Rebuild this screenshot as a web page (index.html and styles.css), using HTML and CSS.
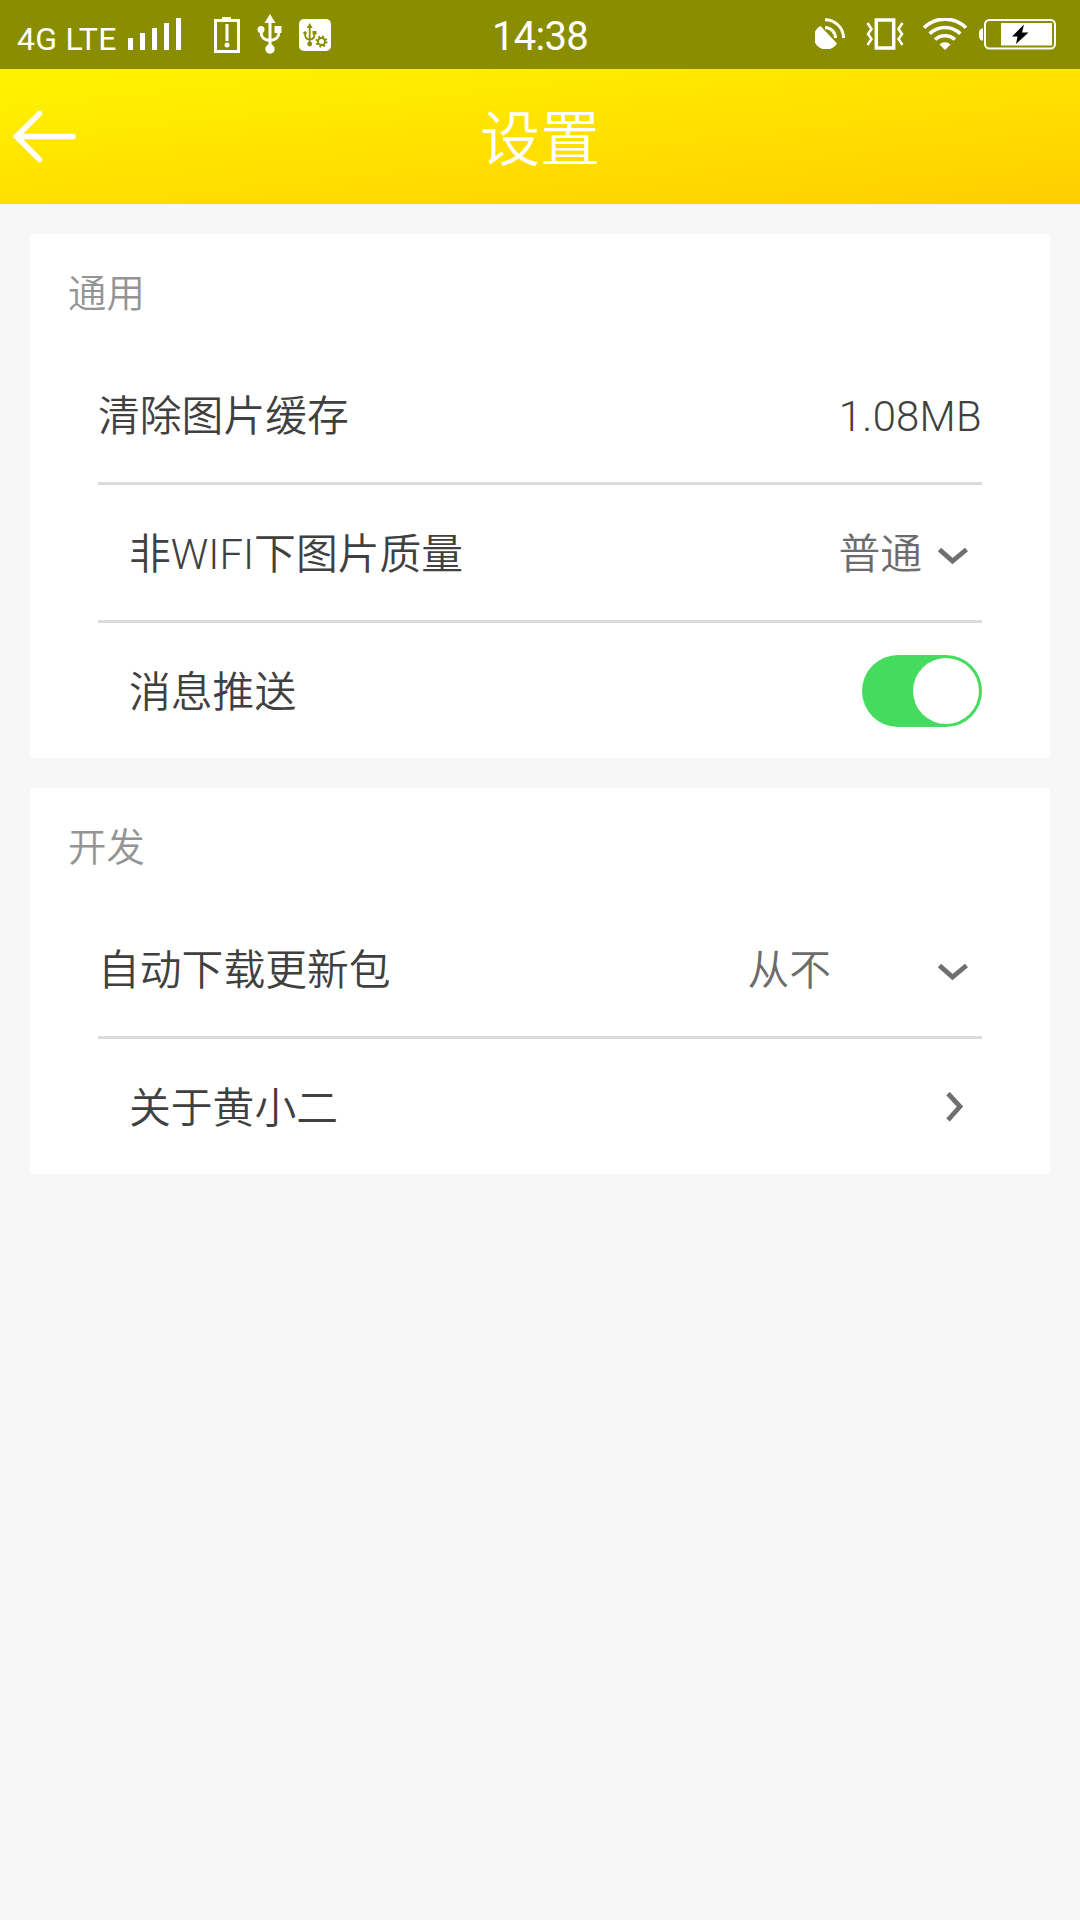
FILE: index.html
```html
<!DOCTYPE html>
<html lang="zh-CN">
<head>
<meta charset="utf-8">
<title>设置</title>
<link rel="stylesheet" href="styles.css">
</head>
<body>
<div class="status">
  <div class="status-left">
    <span class="carrier">4G LTE</span>
    <svg class="signal" width="54" height="32" viewBox="0 0 54 32" fill="#fff">
      <path d="M0 20h5v12H0zM12 15h5v17h-5zM24 10h5v22h-5zM36 5h5v27h-5zM48 0h5v32h-5z"/>
    </svg>
    <svg class="sim" width="26" height="37" viewBox="0 0 26 37" fill="#fff">
      <path fill-rule="evenodd" d="M0 3h8V1h9v2h9v34H0zM3 6v28h20V6z"/>
      <path d="M11.500 8h3v17h-3z"/><circle cx="13" cy="29" r="2.500"/>
    </svg>
    <svg class="usb" width="26" height="42" viewBox="0 0 26 42" fill="#fff">
      <path d="M13 1l5.500 9h-11z"/><circle cx="13" cy="36" r="4.700"/><circle cx="4" cy="16.500" r="3.500"/><path d="M17.500 13H24.500v7h-7z"/>
      <path d="M13 8v28M4 18c0 6 2 9 9 9.500M22 18c0 6-2 9-9 9.500" fill="none" stroke="#fff" stroke-width="3"/>
    </svg>
    <svg class="usb-settings" width="32" height="32" viewBox="0 0 32 32">
      <rect width="32" height="32" rx="5" fill="#fff"/>
      <g fill="#8b8d00">
        <path d="M10.700 4l3 5h-6z"/><circle cx="10.700" cy="25" r="2.400"/><circle cx="6" cy="14" r="1.800"/><path d="M13.500 12h4v3.500h-4z"/>
      </g>
      <g fill="none" stroke="#8b8d00">
        <path d="M10.700 8v17M6 14.500c0 4 1 6 4.700 6M15.500 14.500c0 4-1 6-4.800 6" stroke-width="1.800"/>
        <circle cx="22.500" cy="22.500" r="3.500" stroke-width="2"/>
        <circle cx="22.500" cy="22.500" r="5" stroke-width="2" stroke-dasharray="1.960 1.960"/>
      </g>
    </svg>
  </div>
  <span class="clock">14:38</span>
  <div class="status-right">
    <svg class="satellite" width="31" height="31" viewBox="0 0 31 31">
      <path d="M5.500 8L22 25.500A12.500 12.500 0 1 1 5.500 8z" fill="#fff"/>
      <path d="M10 1.700A18.500 18.500 0 0 1 28.600 20M10 9.500A10.500 10.500 0 0 1 20.500 20" fill="none" stroke="#fff" stroke-width="3"/>
    </svg>
    <svg class="vibrate" width="38" height="32" viewBox="0 0 38 32" fill="none" stroke="#fff">
      <path d="M10.300 2h17.400v28H10.300z" stroke-width="3.500"/>
      <path d="M1.500 5l4 6-3.500 5 3.500 5-4 6M36.500 5l-4 6 3.500 5-3.500 5 4 6" stroke-width="2.500"/>
    </svg>
    <svg class="wifi" width="44" height="32" viewBox="0 0 44 32">
      <path d="M1 9.700a30 30 0 0 1 42 0M6.700 15.700a22 22 0 0 1 30.600 0M12 21.500a15 15 0 0 1 20 0" fill="none" stroke="#fff" stroke-width="3.600"/>
      <path d="M16.500 26.500a8 8 0 0 1 11 0L22 32z" fill="#fff"/>
    </svg>
    <svg class="battery" width="77" height="31" viewBox="0 0 77 31">
      <path d="M4 9.500v12C1 21.500 0 19.500 0 15.500s1-6 4-6z" fill="#fff"/>
      <rect x="6" y="1" width="70" height="28.500" rx="4.500" fill="none" stroke="#fff" stroke-width="2"/>
      <path d="M22 4h51v22.500H22z" fill="#fff"/>
      <path d="M45 5.500L33 17.500h5.500L37 25l12.500-11.500H43z" fill="#000"/>
    </svg>
  </div>
</div>
<header class="titlebar">
  <svg class="back" width="64" height="54" viewBox="0 0 64 54" fill="none" stroke="#fff" stroke-width="5.500" stroke-linecap="round" stroke-linejoin="round">
    <path d="M61 26.500H4M27.500 3.500L4.500 26.500l23 23"/>
  </svg>
  <h1 class="title">设置</h1>
</header>
<main class="content">
  <section class="card">
    <h2 class="card-title">通用</h2>
    <div class="row first">
      <span class="label">清除图片缓存</span>
      <span class="size">1.08MB</span>
    </div>
    <div class="row">
      <span class="label">非<span class="latin">WIFI</span>下图片质量</span>
      <span class="value">普通</span>
      <svg class="chevron" width="30" height="18" viewBox="0 0 30 18"><path d="M1.500 2.500L14.500 14 28.500 2.500"/></svg>
    </div>
    <div class="row">
      <span class="label">消息推送</span>
      <span class="toggle"><span class="knob"></span></span>
    </div>
  </section>
  <section class="card">
    <h2 class="card-title">开发</h2>
    <div class="row first">
      <span class="label">自动下载更新包</span>
      <span class="value wide">从不</span>
      <svg class="chevron" width="30" height="18" viewBox="0 0 30 18"><path d="M1.500 2.500L14.500 14 28.500 2.500"/></svg>
    </div>
    <div class="row">
      <span class="label">关于黄小二</span>
      <svg class="chevron next" width="18" height="30" viewBox="0 0 18 30"><path d="M2 1.500L14 14.500 2 28"/></svg>
    </div>
  </section>
</main>
</body>
</html>
```
FILE: styles.css
```css
* { box-sizing: border-box; }
body {
  margin: 0;
  min-height: 1920px;
  background: #f7f7f7;
  color: #404040;
  font-family: "Noto Sans CJK SC", sans-serif;
  font-weight: 350;
}
svg { display: block; flex: none; }

.status {
  display: grid;
  grid-template-columns: 1fr auto 1fr;
  height: 69px;
  background: #8b8d00;
  color: #fff;
  font-family: Roboto, sans-serif;
}
.status-left, .status-right { display: flex; align-items: flex-start; }
.status-right { justify-content: flex-end; padding-right: 24px; }
.carrier {
  width: 111px;
  margin-left: 17px;
  padding-top: 20px;
  font-size: 32px;
  line-height: 38px;
  font-weight: 400;
  letter-spacing: 0.3px;
  white-space: nowrap;
}
.signal { margin: 18px 0 0; }
.sim { margin: 16px 0 0 32px; }
.usb { margin: 13px 0 0 17px; }
.usb-settings { margin: 19px 0 0 16px; }
.clock {
  padding-top: 14px;
  font-size: 40px;
  line-height: 46px;
  font-weight: 400;
  letter-spacing: -0.7px;
}
.satellite { margin: 18px 20px 0 0; }
.vibrate { margin: 18px 19px 0 0; }
.wifi { margin: 18px 12px 0 0; }
.battery { margin-top: 19px; }

.titlebar {
  display: grid;
  grid-template-columns: 1fr auto 1fr;
  align-items: center;
  height: 135px;
  background: linear-gradient(174deg, #fff400, #ffce00);
}
.back { margin-left: 12px; }
.title {
  margin: 0;
  padding-bottom: 3px;
  color: #fff;
  font-size: 60px;
  line-height: 80px;
  font-weight: 350;
}

.content {
  display: flex;
  flex-direction: column;
  gap: 30px;
  padding: 30px;
}
.card { padding: 0 68px; background: #fff; }
.card-title {
  height: 113px;
  margin: 0 0 0 -30px;
  padding-top: 28px;
  color: #949494;
  font-size: 38.4px;
  line-height: 56px;
  font-weight: 350;
}
.row {
  display: flex;
  align-items: center;
  height: 138px;
  padding-left: 31px;
  border-top: 3px solid #dcdcdc;
  font-size: 41.8px;
  line-height: 60px;
}
.row.first { height: 135px; padding-left: 0; border-top: 0; }
.label { flex: 1; padding-bottom: 3px; }
.latin { font-family: Roboto, sans-serif; font-weight: 300; line-height: 1; }
.size {
  padding-top: 4px;
  font-family: Roboto, sans-serif;
  font-weight: 300;
  letter-spacing: 0.3px;
}
.value { margin-right: 16px; padding-bottom: 3px; color: #6c6c6c; }
.value.wide { margin-right: 107px; }
.chevron {
  margin: 6px 14px 0 0;
  fill: none;
  stroke: #707070;
  stroke-width: 4.8;
}
.chevron.next { margin: 0 18px 0 0; }
.toggle {
  display: flex;
  justify-content: flex-end;
  width: 120px;
  height: 72px;
  padding: 3px;
  border-radius: 36px;
  background: #44db5e;
}
.knob { width: 66px; height: 66px; border-radius: 50%; background: #fff; }
```
